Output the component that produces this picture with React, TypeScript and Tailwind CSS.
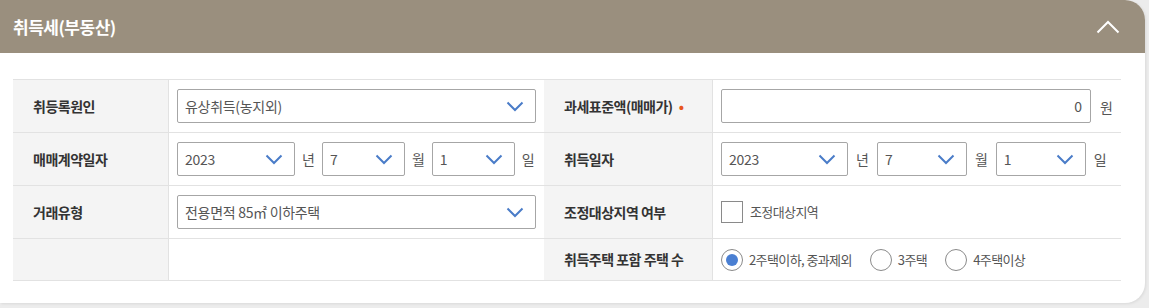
import React from 'react';

const FONT = "font-['Noto_Sans_CJK_KR','Noto_Sans',sans-serif]";

const Chevron = () => (
  <svg width="18" height="11" viewBox="0 0 18 11" fill="none" className="shrink-0">
    <polyline points="1.5,1.5 9,9 16.5,1.5" stroke="#4a7cc8" strokeWidth="2" />
  </svg>
);

const SelectBox = ({ value, width }: { value: string; width: string }) => (
  <div
    className={`flex h-[34px] items-center justify-between rounded-[2px] border border-[#a6a6a6] bg-white pl-[7px] pr-[11px] ${width}`}
  >
    <span className="text-[14px] tracking-[-0.3px] text-[#555]">{value}</span>
    <Chevron />
  </div>
);

const Label = ({ children }: { children: React.ReactNode }) => (
  <div className="flex items-center border-b border-[#e2e2e2] bg-[#f4f4f4] pl-[20px] text-[14px] font-bold tracking-[-0.5px] text-[#333]">
    {children}
  </div>
);

const Cell = ({ children }: { children?: React.ReactNode }) => (
  <div className="flex items-center border-b border-l border-[#e2e2e2] bg-white pl-[8px] pr-[8px]">{children}</div>
);

const Unit = ({ children }: { children: string }) => (
  <span className="text-[14px] text-[#555]">{children}</span>
);

const Radio = ({ checked, label }: { checked?: boolean; label: string }) => (
  <div className="flex items-center gap-[6px]">
    <div className="flex h-[22px] w-[22px] items-center justify-center rounded-full border border-[#8a8a8a] bg-white">
      {checked && <div className="h-[12px] w-[12px] rounded-full bg-[#4a7fd2]" />}
    </div>
    <span className="text-[13px] tracking-[-0.6px] text-[#555]">{label}</span>
  </div>
);

export default function App() {
  return (
    <div className={`h-[308px] w-[1149px] overflow-hidden bg-[#ececec] ${FONT}`}>
      <div className="mr-[4px] h-[303px] overflow-hidden rounded-r-[20px] bg-white shadow-[1px_1px_3px_rgba(0,0,0,0.08)]">
        <div className="flex h-[53px] items-center justify-between bg-[#9a8f7e] pl-[13px] pr-[25px]">
          <span className="text-[17px] font-bold tracking-[-0.5px] text-white">취득세(부동산)</span>
          <svg width="24" height="14" viewBox="0 0 24 14" fill="none">
            <polyline points="1.5,12.5 12,2 22.5,12.5" stroke="#fff" strokeWidth="2" />
          </svg>
        </div>
        <div className="pl-[13px] pr-[24px] pt-[26px]">
          <div className="grid grid-cols-[155px_376px_168px_409px] grid-rows-[53px_53px_53px_42px] border-t border-[#e2e2e2]">
            <Label>취등록원인</Label>
            <Cell>
              <SelectBox value="유상취득(농지외)" width="w-[359px]" />
            </Cell>
            <Label>
              과세표준액(매매가)<span className="ml-[6px] text-[#e8561e]">•</span>
            </Label>
            <Cell>
              <div className="flex h-[34px] w-[370px] items-center justify-end rounded-[2px] border border-[#a6a6a6] pr-[8px] text-[14px] text-[#555]">
                0
              </div>
              <span className="ml-[9px]">
                <Unit>원</Unit>
              </span>
            </Cell>

            <Label>매매계약일자</Label>
            <Cell>
              <div className="flex items-center gap-[7px]">
                <SelectBox value="2023" width="w-[118px]" />
                <Unit>년</Unit>
                <SelectBox value="7" width="w-[83px]" />
                <Unit>월</Unit>
                <SelectBox value="1" width="w-[83px]" />
                <Unit>일</Unit>
              </div>
            </Cell>
            <Label>취득일자</Label>
            <Cell>
              <div className="flex items-center gap-[8px]">
                <SelectBox value="2023" width="w-[127px]" />
                <Unit>년</Unit>
                <SelectBox value="7" width="w-[90px]" />
                <Unit>월</Unit>
                <SelectBox value="1" width="w-[90px]" />
                <Unit>일</Unit>
              </div>
            </Cell>

            <Label>거래유형</Label>
            <Cell>
              <SelectBox value="전용면적 85㎡ 이하주택" width="w-[359px]" />
            </Cell>
            <Label>조정대상지역 여부</Label>
            <Cell>
              <div className="flex items-center gap-[7px]">
                <div className="h-[22px] w-[22px] border border-[#8a8a8a] bg-white" />
                <span className="text-[13px] tracking-[-0.6px] text-[#555]">조정대상지역</span>
              </div>
            </Cell>

            <Label>{''}</Label>
            <Cell />
            <Label>취득주택 포함 주택 수</Label>
            <Cell>
              <div className="flex items-center gap-[18px]">
                <Radio checked label="2주택이하, 중과제외" />
                <Radio label="3주택" />
                <Radio label="4주택이상" />
              </div>
            </Cell>
          </div>
        </div>
      </div>
    </div>
  );
}
